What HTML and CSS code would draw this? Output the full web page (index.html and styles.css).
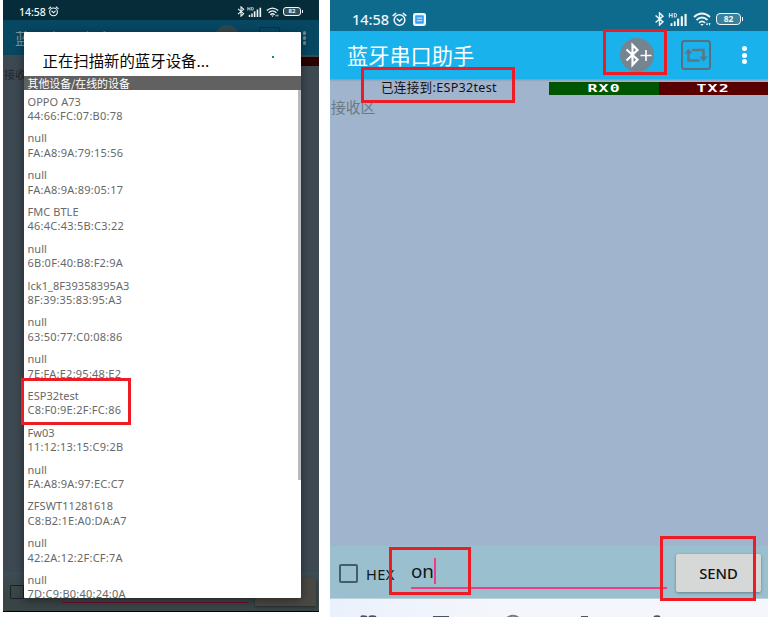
FILE: index.html
```html
<!DOCTYPE html>
<html lang="zh-CN">
<head>
<meta charset="utf-8">
<title>蓝牙串口助手</title>
<link rel="stylesheet" href="styles.css">
</head>
<body>
<svg class="defs" width="0" height="0">
  <symbol id="alarm" viewBox="0 0 16 16"><g fill="none" stroke="currentColor" stroke-width="1.6" stroke-linecap="round"><circle cx="8" cy="8.5" r="5.7"/><path d="M5.5 7.5L8 9.8L10.6 7.5M1.2 3.8L4 1.5M14.8 3.8L12 1.5"/></g></symbol>
  <symbol id="bt" viewBox="0 0 12 16"><path d="M1.5 4L10 11.3L6 15V1L10 4.7L1.5 12" fill="none" stroke="currentColor" stroke-width="1.6"/></symbol>
  <symbol id="signal" viewBox="0 0 20 14"><g fill="currentColor"><rect x="2" y="11" width="2" height="3"/><rect x="5.5" y="9" width="2" height="5"/><rect x="9" y="6" width="2.3" height="8"/><rect x="13" y="3.5" width="2.3" height="10.5"/><rect x="17" y="1" width="2.3" height="13"/></g><path d="M.7 0V5M3.7 0V5M.7 2.5H3.7M6 .5V4.5H7Q8.5 4.5 8.5 2.5T7 .5Z" fill="none" stroke="currentColor"/></symbol>
  <symbol id="wifi" viewBox="0 0 18 14"><g fill="none" stroke="currentColor" stroke-width="1.8"><path d="M1 5Q9-2 17 5M3.5 8Q9 3 14.5 8M6 10.8Q9 8 12 10.8"/></g><path d="M7.3 12L9 14L10.7 12ZM13 13L14 10L15 13ZM15.5 11L16.5 14L17.5 11Z" fill="currentColor"/></symbol>
</svg>
<main class="stage">
  <section class="phone scan">
    <header class="status">
      <span class="clock">14:58</span><svg class="i-alarm"><use href="#alarm"/></svg>
      <span class="grow"></span>
      <svg class="i-bt"><use href="#bt"/></svg><svg class="i-signal"><use href="#signal"/></svg><svg class="i-wifi"><use href="#wifi"/></svg><span class="battery">82</span>
    </header>
    <div class="bar"><span class="bar-title">蓝牙串口助手</span><span class="grow"></span><i class="disc"></i><i class="frame"></i><span class="dots"><i></i><i></i><i></i></span></div>
    <div class="body"><i class="tx-strip"></i><span class="recv">接收区</span></div>
    <footer class="inputbar"><i class="check"></i><i class="line"></i><i class="button"></i></footer>
    <div class="dialog">
      <div class="heading"><h1>正在扫描新的蓝牙设备...</h1><i class="spinner"></i></div>
      <h2>其他设备/在线的设备</h2>
      <ul>
        <li><span>OPPO A73</span><span>44:66:FC:07:B0:78</span></li>
        <li><span>null</span><span>FA:A8:9A:79:15:56</span></li>
        <li><span>null</span><span>FA:A8:9A:89:05:17</span></li>
        <li><span>FMC BTLE</span><span>46:4C:43:5B:C3:22</span></li>
        <li><span>null</span><span>6B:0F:40:B8:F2:9A</span></li>
        <li><span>lck1_8F39358395A3</span><span>8F:39:35:83:95:A3</span></li>
        <li><span>null</span><span>63:50:77:C0:08:86</span></li>
        <li><span>null</span><span>7E:FA:E2:95:48:E2</span></li>
        <li><span>ESP32test</span><span>C8:F0:9E:2F:FC:86</span></li>
        <li><span>Fw03</span><span>11:12:13:15:C9:2B</span></li>
        <li><span>null</span><span>FA:A8:9A:97:EC:C7</span></li>
        <li><span>ZFSWT11281618</span><span>C8:B2:1E:A0:DA:A7</span></li>
        <li><span>null</span><span>42:2A:12:2F:CF:7A</span></li>
        <li><span>null</span><span>7D:C9:B0:40:24:0A</span></li>
      </ul>
      <i class="scrollbar"></i>
    </div>
  </section>

  <section class="phone serial">
    <header class="status">
      <span class="clock">14:58</span><svg class="i-alarm"><use href="#alarm"/></svg><svg class="i-app" viewBox="0 0 12 12"><rect width="12" height="12" rx="2" fill="#eef8ff"/><rect x="2" y="2" width="8" height="8" rx="1" fill="#3aa0ee"/><path d="M3.5 4.7H8.5M3.5 7H8.5" stroke="#b9e0ff"/></svg>
      <span class="grow"></span>
      <svg class="i-bt"><use href="#bt"/></svg><svg class="i-signal"><use href="#signal"/></svg><svg class="i-wifi"><use href="#wifi"/></svg><span class="battery">82</span>
    </header>
    <div class="bar">
      <span class="bar-title">蓝牙串口助手</span><span class="grow"></span>
      <svg class="add" viewBox="0 0 34 34"><circle cx="17" cy="17" r="17" fill="#75858f"/><path d="M6.5 11.5L17.5 21.5L12.5 27V7L17.5 12L6.5 22.5" fill="none" stroke="#fff" stroke-width="2.2"/><path d="M20.5 17.5H31.5M26 12V23" stroke="#fff" stroke-width="1.6"/></svg>
      <svg class="repeat" viewBox="0 0 30 30"><rect x="1" y="1" width="28" height="28" rx="2.5" fill="none" stroke="#56717e" stroke-width="2"/><g fill="none" stroke="#5f757f" stroke-width="2.5"><path d="M7.5 12V20.5H18.5M11 10H22.5V18"/></g><path d="M3.5 13.5L7.5 8.5L11.5 13.5ZM18.5 16.5H26.5L22.5 21.5Z" fill="#5f757f"/></svg>
      <span class="dots"><i></i><i></i><i></i></span>
    </div>
    <div class="body">
      <div class="connection"><span class="connected">已连接到:ESP32test</span><span class="rx"><b>RX0</b></span><span class="tx"><b>TX2</b></span></div>
      <span class="recv">接收区</span>
    </div>
    <footer class="inputbar"><i class="check"></i><span class="hex">HEX</span><span class="field"><span>on</span><i class="caret"></i></span><span class="send">SEND</span></footer>
    <nav><svg viewBox="0 0 438 17"><g fill="none" stroke="#4b505b" stroke-width="2"><path d="M31 17Q32 15.5 37 17M39 17Q42 15.5 46 17M103 17H119"/><path d="M177 18Q183 13.5 189 18" stroke="#777b84"/><path d="M251 17H258M324 17Q327 15.5 330 17"/></g></svg></nav>
  </section>

  <i class="mark mark-device"></i><i class="mark mark-connected"></i><i class="mark mark-add"></i><i class="mark mark-field"></i><i class="mark mark-send"></i>
</main>
</body>
</html>
```
FILE: styles.css
```css
* { box-sizing: border-box; }
body { margin: 0; background: #fff; font-family: "Noto Sans", "Noto Sans CJK SC", sans-serif; }
i { display: block; font-style: normal; }
svg { display: block; flex: none; }
h1, h2, ul { margin: 0; padding: 0; font-weight: 400; }
.defs { position: absolute; }
.stage { position: relative; width: 776px; height: 630px; display: flex; align-items: flex-start; padding-left: 3px; gap: 11px; overflow: hidden; }
.phone { position: relative; display: flex; flex-direction: column; overflow: hidden; flex: none; }
.grow { flex: 1; }
.status, .bar, .inputbar { display: flex; align-items: center; flex: none; }
.status { color: #f0f6f8; }
.clock { font-family: "Noto Sans", sans-serif; font-weight: 500; white-space: nowrap; }
.body { flex: 1; }
.bar-title { white-space: nowrap; font-family: "Noto Sans CJK SC", sans-serif; }
.dots { display: flex; flex-direction: column; }
.dots i { border-radius: 50%; background: #fff; }
.battery { position: relative; border: 1px solid currentColor; font-weight: 700; text-align: center; flex: none; }
.battery::after { content: ""; position: absolute; right: -3px; top: 30%; height: 40%; border-right: 1.5px solid currentColor; }

/* Scanning phone */
.scan { width: 316px; height: 612px; background: #3d4851; border-bottom: 1px solid #000; }
.scan .status { height: 20px; padding: 3px 18px 0 16px; background: #062c39; }
.scan .clock { font-size: 10.5px; width: 29px; line-height: 14px; }
.scan .i-alarm { width: 11px; height: 11px; }
.scan .i-bt { width: 8px; height: 11px; margin-right: 2px; }
.scan .i-signal { width: 15px; height: 10px; margin-right: 4px; }
.scan .i-wifi { width: 13px; height: 10px; margin-right: 4px; }
.scan .battery { width: 18px; height: 9px; border-radius: 3px; font-size: 6px; line-height: 7px; background: #344f5a; }
.scan .bar { height: 35px; background: #074762; padding: 0 13px 0 12px; align-items: flex-start; }
.scan .bar-title { color: #7f9399; font-size: 15.5px; line-height: 36px; }
.scan .disc { width: 24px; height: 24px; margin: 5px 20px 0 0; border-radius: 50%; background: #344750; }
.scan .frame { width: 21px; height: 22px; margin: 7px 23px 0 0; border: 1px solid #142e3a; border-radius: 2px; }
.scan .dots { gap: 1.5px; padding-top: 11px; }
.scan .dots i { width: 3.5px; height: 3.5px; background: #748990; }
.scan .body { display: flex; flex-direction: column; padding-top: 2px; }
.scan .tx-strip { height: 9px; width: 158px; align-self: flex-end; background: #2a0001; }
.scan .recv { font-size: 11px; line-height: 18px; color: #20282d; padding-left: 1px; }
.scan .inputbar { height: 39px; background: linear-gradient(#3d4d56, #394444 60%); padding: 0 3px 0 7px; }
.scan .check { width: 14px; height: 14px; border: 1.3px solid #172126; border-radius: 1px; margin-right: 38px; }
.scan .line { width: 186px; height: 1.5px; background: #720b35; margin: 22px 7px 0 0; }
.scan .button { width: 61px; height: 28px; background: #4a4845; box-shadow: 0 1px 2px #252b2d; }
.dialog { position: absolute; left: 20.5px; top: 32px; width: 277px; height: 566px; background: #fff; border-radius: 1px; box-shadow: 0 2px 10px rgba(0,0,0,.45); overflow: hidden; }
.heading { height: 43.5px; display: flex; padding: 16px 27px 0 19px; justify-content: space-between; }
.heading h1 { font: 400 15.4px/24px "Noto Sans CJK SC", sans-serif; color: #080808; white-space: nowrap; }
.spinner { width: 2px; height: 2px; margin-top: 8px; background: #09917f; }
.dialog h2 { height: 14.5px; background: #616161; color: #fff; font: 400 10.9px/15px "Noto Sans CJK SC", sans-serif; padding-left: 4px; }
.dialog ul { list-style: none; padding: 4.5px 0 0 4px; }
.dialog li { height: 36.82px; display: flex; flex-direction: column; color: #686868; font-size: 11px; line-height: 14.4px; white-space: nowrap; letter-spacing: .06px; }
.dialog li span { width: max-content; }
.dialog li span + span { letter-spacing: .24px; }
.dialog .scrollbar { position: absolute; right: 0; top: 58px; width: 3px; height: 390px; background: #b9b9b9; }

/* Connected phone */
.serial { width: 438px; height: 617px; background: #a1b4ce; }
.serial .status { height: 31px; padding: 7px 27px 0 22px; background: #0f6b8e; }
.serial .clock { font-size: 14.5px; width: 40px; line-height: 20px; }
.serial .i-alarm { width: 15px; height: 15px; margin-right: 6px; }
.serial .i-app { width: 13px; height: 13px; }
.serial .i-bt { width: 11px; height: 14px; margin-right: 3px; }
.serial .i-signal { width: 20px; height: 13px; margin-right: 5px; }
.serial .i-wifi { width: 18px; height: 14px; margin-right: 5px; }
.serial .battery { width: 25px; height: 12px; border-radius: 4px; font-size: 8.5px; line-height: 10px; background: #3a819b; }
.serial .bar { position: relative; height: 48px; background: #1ab2ec; padding: 0 21px 0 17px; box-shadow: 0 1px 2px rgba(50,90,120,.35); }
.serial .bar-title { color: #fff; font-size: 21.2px; line-height: 48px; }
.serial .add { width: 34px; height: 34px; margin-right: 27px; }
.serial .repeat { width: 30px; height: 30px; margin-right: 31px; }
.serial .dots { gap: 1.7px; }
.serial .dots i { width: 5px; height: 5px; }
.serial .body { padding-top: 2px; }
.connection { height: 14px; display: flex; align-items: center; }
.connected { width: 219px; padding-left: 51px; color: #111; font-size: 12.6px; line-height: 14px; letter-spacing: .28px; white-space: nowrap; }
.rx, .tx { height: 13px; display: flex; align-items: center; justify-content: center; color: #fff; font: 700 11px/13px "DejaVu Sans Mono", monospace; letter-spacing: .8px; }
.rx b, .tx b { transform: scaleX(1.5); }
.rx { width: 110px; background: #005500; }
.tx { width: 109px; background: #580000; }
.serial .recv { display: block; font: 400 14.8px/22px "Noto Sans CJK SC", sans-serif; color: #6b7b85; padding: 1px 0 0 1px; }
.serial .inputbar { height: 53px; background: #9abfce; padding: 0 7px 0 9px; border-bottom: 1px solid #b8d2dc; }
.serial .check { width: 19px; height: 19px; border: 2px solid #455d69; border-radius: 2px; margin: 3px 8px 0 0; flex: none; }
.hex { width: 45px; flex: none; font-size: 14.6px; letter-spacing: .4px; line-height: 20px; margin-top: 3px; color: #101618; white-space: nowrap; }
.field { display: flex; align-items: center; align-self: flex-start; flex: none; width: 256px; height: 33px; margin: 10px 9px 0 0; border-bottom: 2px solid #f23d80; color: #101618; font-size: 18.8px; line-height: 26px; padding-bottom: 2px; }
.caret { width: 2px; height: 26px; background: #f23d80; }
.send { width: 85px; flex: none; height: 38px; margin-top: 2px; display: flex; align-items: center; justify-content: center; background: #d6d7d7; color: #111; font-size: 14.8px; font-weight: 500; border-radius: 2px; box-shadow: 0 1px 3px #65818b; }
.serial nav { height: 18px; flex: none; background: linear-gradient(90deg, #eaf1fc, #f5f6fb 40%); }
nav svg { width: 438px; height: 17px; margin-top: 1px; }

/* Highlight annotations */
.mark { position: absolute; border: 3px solid #ed1c24; }
.mark-device { left: 21px; top: 378px; width: 110px; height: 47px; }
.mark-connected { left: 361px; top: 67px; width: 154px; height: 36px; }
.mark-add { left: 603px; top: 29px; width: 64px; height: 46px; }
.mark-field { left: 389px; top: 547px; width: 82px; height: 48px; }
.mark-send { left: 660px; top: 536px; width: 96px; height: 65px; }
```
